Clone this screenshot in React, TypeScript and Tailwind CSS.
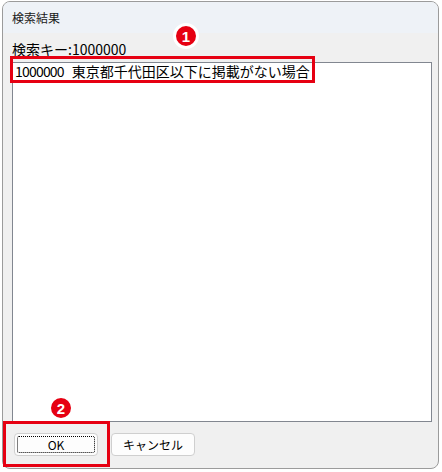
export default function App() {
  return (
    <div className="relative w-[442px] h-[472px] bg-white font-['Noto_Sans_CJK_JP',sans-serif] text-black">
      <div className="ml-[2px] mt-px w-[437px] h-[468px] border border-[#9b9b9b] rounded-[8px] overflow-hidden flex flex-col bg-[#f0f0f0]">
        <div className="h-[31px] shrink-0 bg-[#eef2f7] pl-[9px] flex items-center text-[12px] text-[#1a1a1a]">
          検索結果
        </div>
        <div className="flex-1 flex flex-col pl-[9px] pr-[6px]">
          <div className="h-[29px] pt-[6px] text-[14px] leading-[20px]">検索キー:1000000</div>
          <div className="h-[360px] border border-[#828790] bg-white">
            <div className="pl-[2px] flex items-center h-[16px] whitespace-nowrap">
              <span className="text-[14px] tracking-[-0.8px]">1000000</span>
              <span className="ml-[8px] text-[14px]">東京都千代田区以下に掲載がない場合</span>
            </div>
          </div>
          <div className="mt-[11px] pl-[2px] flex gap-[13px] text-[12px]">
            <button className="relative w-[84px] h-[23px] rounded-[4px] border border-[#cfcfcf] bg-[#fdfdfd] flex items-center justify-center">
              <span className="absolute inset-[2px] border border-dotted border-black rounded-[2px]" />
              OK
            </button>
            <button className="w-[84px] h-[23px] rounded-[4px] border border-[#cfcfcf] bg-[#fdfdfd] flex items-center justify-center">
              キャンセル
            </button>
          </div>
        </div>
      </div>

      {/* annotations */}
      <div className="absolute left-[10px] top-[55px] w-[305px] h-[27px] border-[3px] border-[#e60012]" />
      <div className="absolute left-[3px] top-[420px] w-[107px] h-[46px] border-[3px] border-[#e60012]" />
      <div className="absolute left-[173px] top-[22px] w-[26px] h-[26px] rounded-full bg-[#e60012] border-[3px] border-white flex items-center justify-center text-white font-bold text-[15px] leading-none font-['Liberation_Sans',sans-serif]">
        1
      </div>
      <div className="absolute left-[48px] top-[394px] w-[26px] h-[26px] rounded-full bg-[#e60012] border-[3px] border-white flex items-center justify-center text-white font-bold text-[15px] leading-none font-['Liberation_Sans',sans-serif]">
        2
      </div>
    </div>
  );
}
